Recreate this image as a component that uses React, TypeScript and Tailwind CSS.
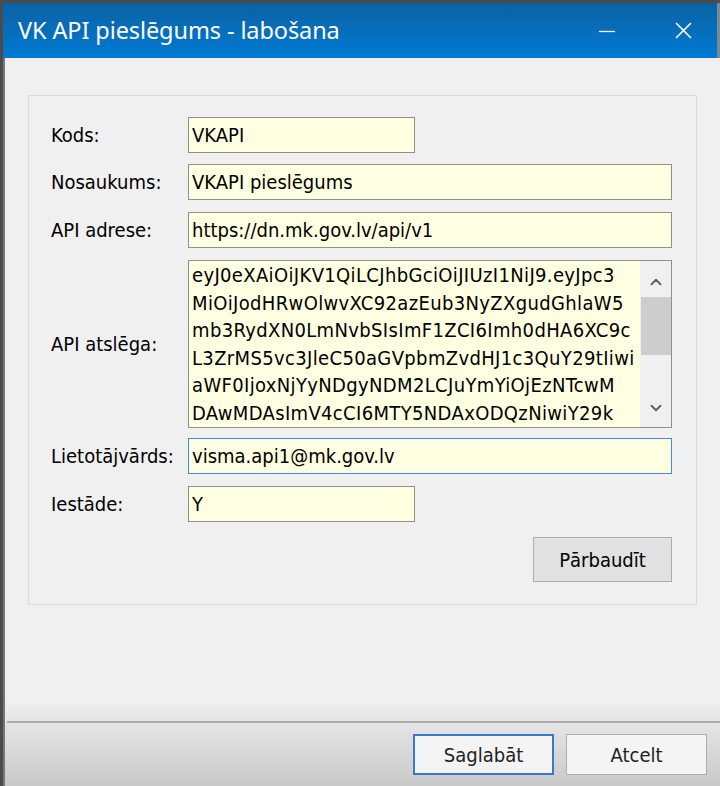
import { ChevronDown, ChevronUp } from 'lucide-react';

const TOKEN_LINES = [
  'eyJ0eXAiOiJKV1QiLCJhbGciOiJIUzI1NiJ9.eyJpc3',
  'MiOiJodHRwOlwvXC92azEub3NyZXgudGhlaW5',
  'mb3RydXN0LmNvbSIsImF1ZCI6Imh0dHA6XC9c',
  'L3ZrMS5vc3JleC50aGVpbmZvdHJ1c3QuY29tIiwi',
  'aWF0IjoxNjYyNDgyNDM2LCJuYmYiOjEzNTcwM',
  'DAwMDAsImV4cCI6MTY5NDAxODQzNiwiY29k',
];

const font = 'font-["DejaVu_Sans_Condensed","DejaVu_Sans",sans-serif]';

function Field({ label, value, short, focused }: { label: string; value: string; short?: boolean; focused?: boolean }) {
  return (
    <div className="flex items-center">
      <div className="w-[137px] shrink-0 text-[20px] text-black">{label}</div>
      <div
        className={`h-[36px] flex items-center pl-[3px] bg-[#ffffe1] text-[20px] text-black border ${
          focused ? 'border-[#3c8ee0]' : 'border-[#8f8f8f]'
        } ${short ? 'w-[227px]' : 'w-[484px]'}`}
      >
        {value}
      </div>
    </div>
  );
}

export default function App() {
  return (
    <div className={`w-[720px] h-[786px] bg-[#4b4b4b] pl-[3px] pt-[3px] flex flex-col ${font}`}>
      {/* title bar */}
      <div className="h-[55px] shrink-0 flex items-center bg-gradient-to-b from-[#0a62a4] to-[#007ad3] pl-[15px] border-r-[3px] border-[#7a8a98]">
        <span className='flex-1 text-white text-[23.5px] font-["Noto_Sans",sans-serif] tracking-[-0.1px]'>
          VK API pieslēgums - labošana
        </span>
        <svg width="16" height="16" viewBox="0 0 16 16" className="mr-[60px]">
          <line x1="0" y1="8.5" x2="16" y2="8.5" stroke="white" strokeWidth="1.3" />
        </svg>
        <svg width="17" height="17" viewBox="0 0 17 17" className="mr-[25px]">
          <path d="M1 1 L16 16 M16 1 L1 16" stroke="white" strokeWidth="1.7" />
        </svg>
      </div>

      {/* body */}
      <div className="flex-1 flex flex-col border-l-2 border-[#777] bg-gradient-to-b from-[#f0f0f0] from-[88%] to-[#c9c9c9]">
        <div className="pt-[37px] pl-[23px] pr-[23px]">
          <div className="h-[510px] border border-[#dadada] pt-[21px] pl-[22px]">
            <div className="flex flex-col">
              <Field label="Kods:" value="VKAPI" short />
              <div className="h-[11px]" />
              <Field label="Nosaukums:" value="VKAPI pieslēgums" />
              <div className="h-[12px]" />
              <Field label="API adrese:" value="https://dn.mk.gov.lv/api/v1" />
              <div className="h-[12px]" />
              <div className="flex items-center">
                <div className="w-[137px] shrink-0 text-[20px] text-black">API atslēga:</div>
                <div className="w-[484px] h-[168px] flex bg-[#ffffe1] border border-[#8f8f8f]">
                  <div className="flex-1 pl-[3px] pt-[1px] text-[20px] leading-[27.5px] tracking-[0.35px] text-black whitespace-nowrap overflow-hidden">
                    {TOKEN_LINES.map((l) => (
                      <div key={l}>{l}</div>
                    ))}
                  </div>
                  <div className="w-[31px] shrink-0 bg-[#f0f0f0] flex flex-col items-center">
                    <ChevronUp size={18} strokeWidth={2.5} className="text-[#606060] mt-[12px]" />
                    <div className="w-[30px] h-[58px] bg-[#cdcdcd] mt-[6px]" />
                    <div className="flex-1" />
                    <ChevronDown size={18} strokeWidth={2.5} className="text-[#606060] mb-[10px]" />
                  </div>
                </div>
              </div>
              <div className="h-[10px]" />
              <Field label="Lietotājvārds:" value="visma.api1@mk.gov.lv" focused />
              <div className="h-[12px]" />
              <Field label="Iestāde:" value="Y" short />
              <div className="flex justify-end pr-[24px] mt-[15px]">
                <button className="w-[139px] h-[45px] bg-[#e1e1e1] border border-[#adadad] text-[20px] text-black">
                  Pārbaudīt
                </button>
              </div>
            </div>
          </div>
        </div>

        <div className="flex-1" />
        <div className="h-[2px] ml-[2px] bg-[#acacac] border-b border-[#e8e8e8] box-content" />
        <div className="flex justify-end gap-[12px] pr-[13px] pt-[10px] pb-[11px]">
          <button className="w-[141px] h-[41px] bg-[#f4f4f4] border-2 border-[#3a78c9] text-[20px] text-[#222]">
            Saglabāt
          </button>
          <button className="w-[141px] h-[41px] bg-[#f4f4f4] border border-[#adadad] text-[20px] text-[#222]">
            Atcelt
          </button>
        </div>
      </div>
    </div>
  );
}
